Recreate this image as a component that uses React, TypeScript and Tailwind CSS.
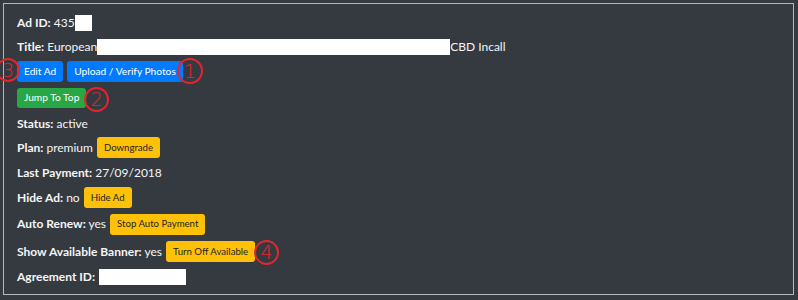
const font = { fontFamily: 'Lato, "Noto Sans", sans-serif' };

function Btn({ color, children }: { color: "blue" | "green" | "yellow"; children: React.ReactNode }) {
  const tone =
    color === "blue"
      ? "h-[21px] bg-[#007bff] text-white text-[10.2px] px-[7px]"
      : color === "green"
        ? "h-[20px] bg-[#28a745] text-white text-[10.2px] px-[7px]"
        : "h-[21px] bg-[#ffc107] text-[#212529] text-[9.6px] px-[7px]";
  return (
    <span className={`inline-flex items-center rounded-[3px] leading-none ${tone}`}>
      {children}
    </span>
  );
}

function Mark({ n, className }: { n: string; className: string }) {
  return (
    <span
      className={`absolute flex items-center justify-center rounded-full border-2 border-[#e3262e] text-[19px] leading-none text-[#e3262e] ${className}`}
      style={{ fontFamily: '"DejaVu Sans", sans-serif', fontWeight: 300 }}
    >
      {n}
    </span>
  );
}

function Row({ h, children }: { h: string; children: React.ReactNode }) {
  return <div className={`flex items-center gap-[4px] ${h}`}>{children}</div>;
}

export default function App() {
  return (
    <div className="relative h-[300px] w-[798px] overflow-hidden bg-[#343a40] p-[3px] text-[12px] text-[#f4f5f6]" style={font}>
      <div className="flex h-[292px] w-[791px] flex-col border border-[#b4b7bb] pl-[13px] pt-[7px]">
        <Row h="h-[24px]">
          <span>
            <b>Ad ID:</b> 435
          </span>
          <span className="-ml-[4px] inline-block h-[16px] w-[17px] bg-white" />
        </Row>
        <Row h="h-[23px]">
          <span>
            <b>Title:</b> European
          </span>
          <span className="-ml-[4px] inline-block h-[16px] w-[353px] bg-white" />
          <span className="-ml-[4px]">CBD Incall</span>
        </Row>
        <Row h="h-[26px]">
          <Btn color="blue">Edit Ad</Btn>
          <Btn color="blue">Upload / Verify Photos</Btn>
        </Row>
        <Row h="h-[27px]">
          <Btn color="green">Jump To Top</Btn>
        </Row>
        <Row h="h-[25px]">
          <span>
            <b>Status:</b> active
          </span>
        </Row>
        <Row h="h-[23px]">
          <span>
            <b>Plan:</b> premium
          </span>
          <Btn color="yellow">Downgrade</Btn>
        </Row>
        <Row h="h-[27px]">
          <span>
            <b>Last Payment:</b> 27/09/2018
          </span>
        </Row>
        <Row h="h-[23px]">
          <span>
            <b>Hide Ad:</b> no
          </span>
          <Btn color="yellow">Hide Ad</Btn>
        </Row>
        <Row h="h-[30px]">
          <span>
            <b>Auto Renew:</b> yes
          </span>
          <Btn color="yellow">Stop Auto Payment</Btn>
        </Row>
        <Row h="h-[25px]">
          <span>
            <b>Show Available Banner:</b> yes
          </span>
          <Btn color="yellow">Turn Off Available</Btn>
        </Row>
        <Row h="h-[26px]">
          <span>
            <b>Agreement ID:</b>
          </span>
          <span className="inline-block h-[16px] w-[87px] bg-white" />
        </Row>
      </div>

      <Mark n="3" className="left-[-4px] top-[58px] h-[24px] w-[24px]" />
      <Mark n="1" className="left-[177px] top-[58px] h-[26px] w-[26px]" />
      <Mark n="2" className="left-[84px] top-[87px] h-[25px] w-[25px]" />
      <Mark n="4" className="left-[254px] top-[240px] h-[25px] w-[25px]" />
    </div>
  );
}
